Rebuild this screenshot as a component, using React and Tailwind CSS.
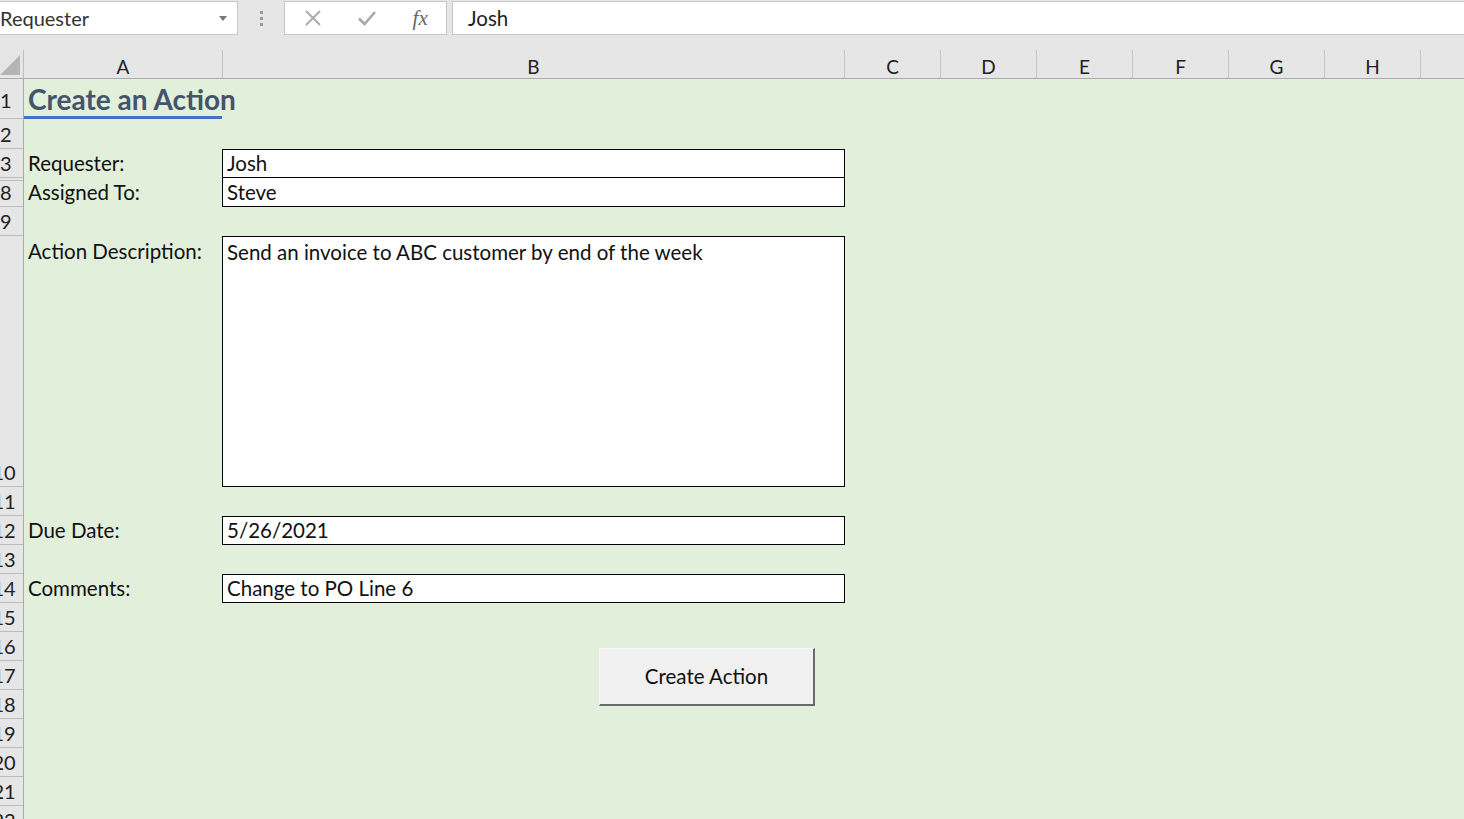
import React from 'react';

// Excel-style "Create an Action" form sheet

const FONT = { fontFamily: 'Lato, "Open Sans", sans-serif' };

const COLS = [
  { id: 'A', w: 199 },
  { id: 'B', w: 622 },
  { id: 'C', w: 96 },
  { id: 'D', w: 96 },
  { id: 'E', w: 96 },
  { id: 'F', w: 96 },
  { id: 'G', w: 96 },
  { id: 'H', w: 96 },
];

const ROWS = [
  ['1', 'h-[40px] pb-[6px]'],
  ['2', 'h-[30px] pb-[2px]'],
  ['3', 'h-[29px] pb-[2px]'],
  ['8', 'h-[29px] pb-[2px] shadow-[inset_0_2px_0_#e6e6e6,inset_0_3px_0_#bcbcbc]'],
  ['9', 'h-[29px] pb-[2px]'],
  ['10', 'h-[251px] pb-[2px]'],
  ['11', 'h-[29px] pb-[2px]'],
  ['12', 'h-[29px] pb-[2px]'],
  ['13', 'h-[29px] pb-[2px]'],
  ['14', 'h-[29px] pb-[2px]'],
  ['15', 'h-[29px] pb-[2px]'],
  ['16', 'h-[29px] pb-[2px]'],
  ['17', 'h-[29px] pb-[2px]'],
  ['18', 'h-[29px] pb-[2px]'],
  ['19', 'h-[29px] pb-[2px]'],
  ['20', 'h-[29px] pb-[2px]'],
  ['21', 'h-[29px] pb-[2px]'],
  ['22', 'h-[29px] pb-[2px]'],
];

const FormulaBar = () => (
  <div className="flex h-[50px] items-start gap-0 bg-[#e6e6e6] pt-px">
    <div className="flex h-[34px] w-[238px] items-center justify-between border border-l-0 border-[#c6c6c6] bg-white pr-[10px]">
      <span className="text-[20px] leading-none text-[#333]">Requester</span>
      <svg width="8" height="5" viewBox="0 0 8 5"><path d="M0 0h8L4 5z" fill="#777" /></svg>
    </div>
    <div className="flex h-[34px] w-[46px] flex-col items-center justify-center gap-[3px]">
      <span className="h-[3px] w-[3px] bg-[#9a9a9a]" />
      <span className="h-[3px] w-[3px] bg-[#9a9a9a]" />
      <span className="h-[3px] w-[3px] bg-[#9a9a9a]" />
    </div>
    <div className="flex h-[34px] w-[163px] items-center border border-[#c6c6c6] bg-white">
      <div className="flex w-[54px] justify-center pl-[2px]">
        <svg width="18" height="18" viewBox="0 0 18 18">
          <path d="M2 2L16 16M16 2L2 16" stroke="#a9a9a9" strokeWidth="1.8" />
        </svg>
      </div>
      <div className="flex w-[56px] justify-center">
        <svg width="20" height="18" viewBox="0 0 20 18">
          <path d="M2 9.5L7.5 15L18 3" stroke="#a9a9a9" strokeWidth="2.6" fill="none" />
        </svg>
      </div>
      <div className="flex w-[52px] justify-center">
        <span className="text-[21px] italic leading-none text-[#666]" style={{ fontFamily: '"Liberation Serif", serif' }}>fx</span>
      </div>
    </div>
    <div className="ml-[5px] flex h-[34px] flex-1 items-center border border-r-0 border-[#c6c6c6] bg-white pl-[15px]">
      <span className="text-[20.5px] leading-none text-[#222]">Josh</span>
    </div>
  </div>
);

const ColumnHeader = () => (
  <div className="flex h-[29px] border-b border-[#ababab] bg-[#e6e6e6]">
    <div className="flex w-[24px] shrink-0 items-end border-r border-[#bdbdbd] pb-[3px]">
      <svg width="20" height="20" viewBox="0 0 20 20"><path d="M20 0V20H0z" fill="#b5b5b5" /></svg>
    </div>
    {COLS.map((c) => (
      <div
        key={c.id}
        className="flex shrink-0 items-end justify-center border-r border-[#c3c3c3] pb-[2px] text-[19px] leading-none text-[#222]"
        style={{ width: c.w }}
      >
        {c.id}
      </div>
    ))}
    <div className="flex-1" />
  </div>
);

const RowHeader = () => (
  <div className="w-[24px] shrink-0 overflow-hidden border-r border-[#a9a9a9] bg-[#e6e6e6]">
    {ROWS.map(([n, h]) => (
      <div key={n} className={`${h} flex items-end overflow-hidden border-b border-[#bcbcbc]`}>
        {n.length === 1 ? (
          <span className="block w-[10px] shrink-0 text-center text-[20px] leading-[24px] text-[#222]">{n}</span>
        ) : (
          <span className="-ml-[16px] block w-[40px] shrink-0 text-center text-[20px] leading-[24px] text-[#222]">{n}</span>
        )}
      </div>
    ))}
  </div>
);

const Label = ({ children }) => (
  <div className="flex w-[198px] shrink-0 items-center pl-[4px] text-[20.5px] text-[#111]">{children}</div>
);

const Field = ({ children, className = '' }) => (
  <div className={`w-[623px] shrink-0 border border-black bg-white pl-[4px] text-[20.5px] text-[#111] ${className}`}>
    {children}
  </div>
);

const Sheet = () => (
  <div className="flex min-w-0 flex-1 flex-col bg-[#e2efda]">
    {/* Row 1 - title */}
    <div className="flex h-[40px] items-stretch">
      <div className="w-[198px] shrink-0 border-b-[3px] border-[#4472c4]">
        <span className="whitespace-nowrap pl-[4px] text-[28px] font-bold leading-[40px] text-[#44546a]">Create an Action</span>
      </div>
    </div>
    {/* Row 2 */}
    <div className="h-[30px]" />
    {/* Row 3 */}
    <div className="flex h-[29px]">
      <Label>Requester:</Label>
      <Field className="flex h-[29px] items-center">Josh</Field>
    </div>
    {/* Row 8 */}
    <div className="flex h-[29px]">
      <Label>Assigned To:</Label>
      <Field className="flex h-[29px] items-center border-t-0">Steve</Field>
    </div>
    {/* Row 9 */}
    <div className="h-[29px]" />
    {/* Row 10 */}
    <div className="flex h-[251px]">
      <div className="w-[198px] shrink-0 pl-[4px] pt-px text-[20.5px] leading-[29px] text-[#111]">Action Description:</div>
      <Field className="h-[251px] pt-px leading-[29px]">Send an invoice to ABC customer by end of the week</Field>
    </div>
    {/* Row 11 */}
    <div className="h-[29px]" />
    {/* Row 12 */}
    <div className="flex h-[29px]">
      <Label>Due Date:</Label>
      <Field className="flex h-[29px] items-center">5/26/2021</Field>
    </div>
    {/* Row 13 */}
    <div className="h-[29px]" />
    {/* Row 14 */}
    <div className="flex h-[29px]">
      <Label>Comments:</Label>
      <Field className="flex h-[29px] items-center">Change to PO Line 6</Field>
    </div>
    {/* Rows 15+ with the form button */}
    <div className="pl-[575px] pt-[45px]">
      <button className="flex h-[58px] w-[216px] items-center justify-center border border-b-2 border-r-2 border-[#f8f8f8] border-b-[#6b6b6b] border-r-[#6b6b6b] bg-[#f0f0f0] text-[20.5px] text-[#111]">
        Create Action
      </button>
    </div>
  </div>
);

export default function App() {
  return (
    <div className="h-[819px] w-[1464px] overflow-hidden bg-[#e6e6e6]" style={FONT}>
      <FormulaBar />
      <ColumnHeader />
      <div className="flex">
        <RowHeader />
        <Sheet />
      </div>
    </div>
  );
}
